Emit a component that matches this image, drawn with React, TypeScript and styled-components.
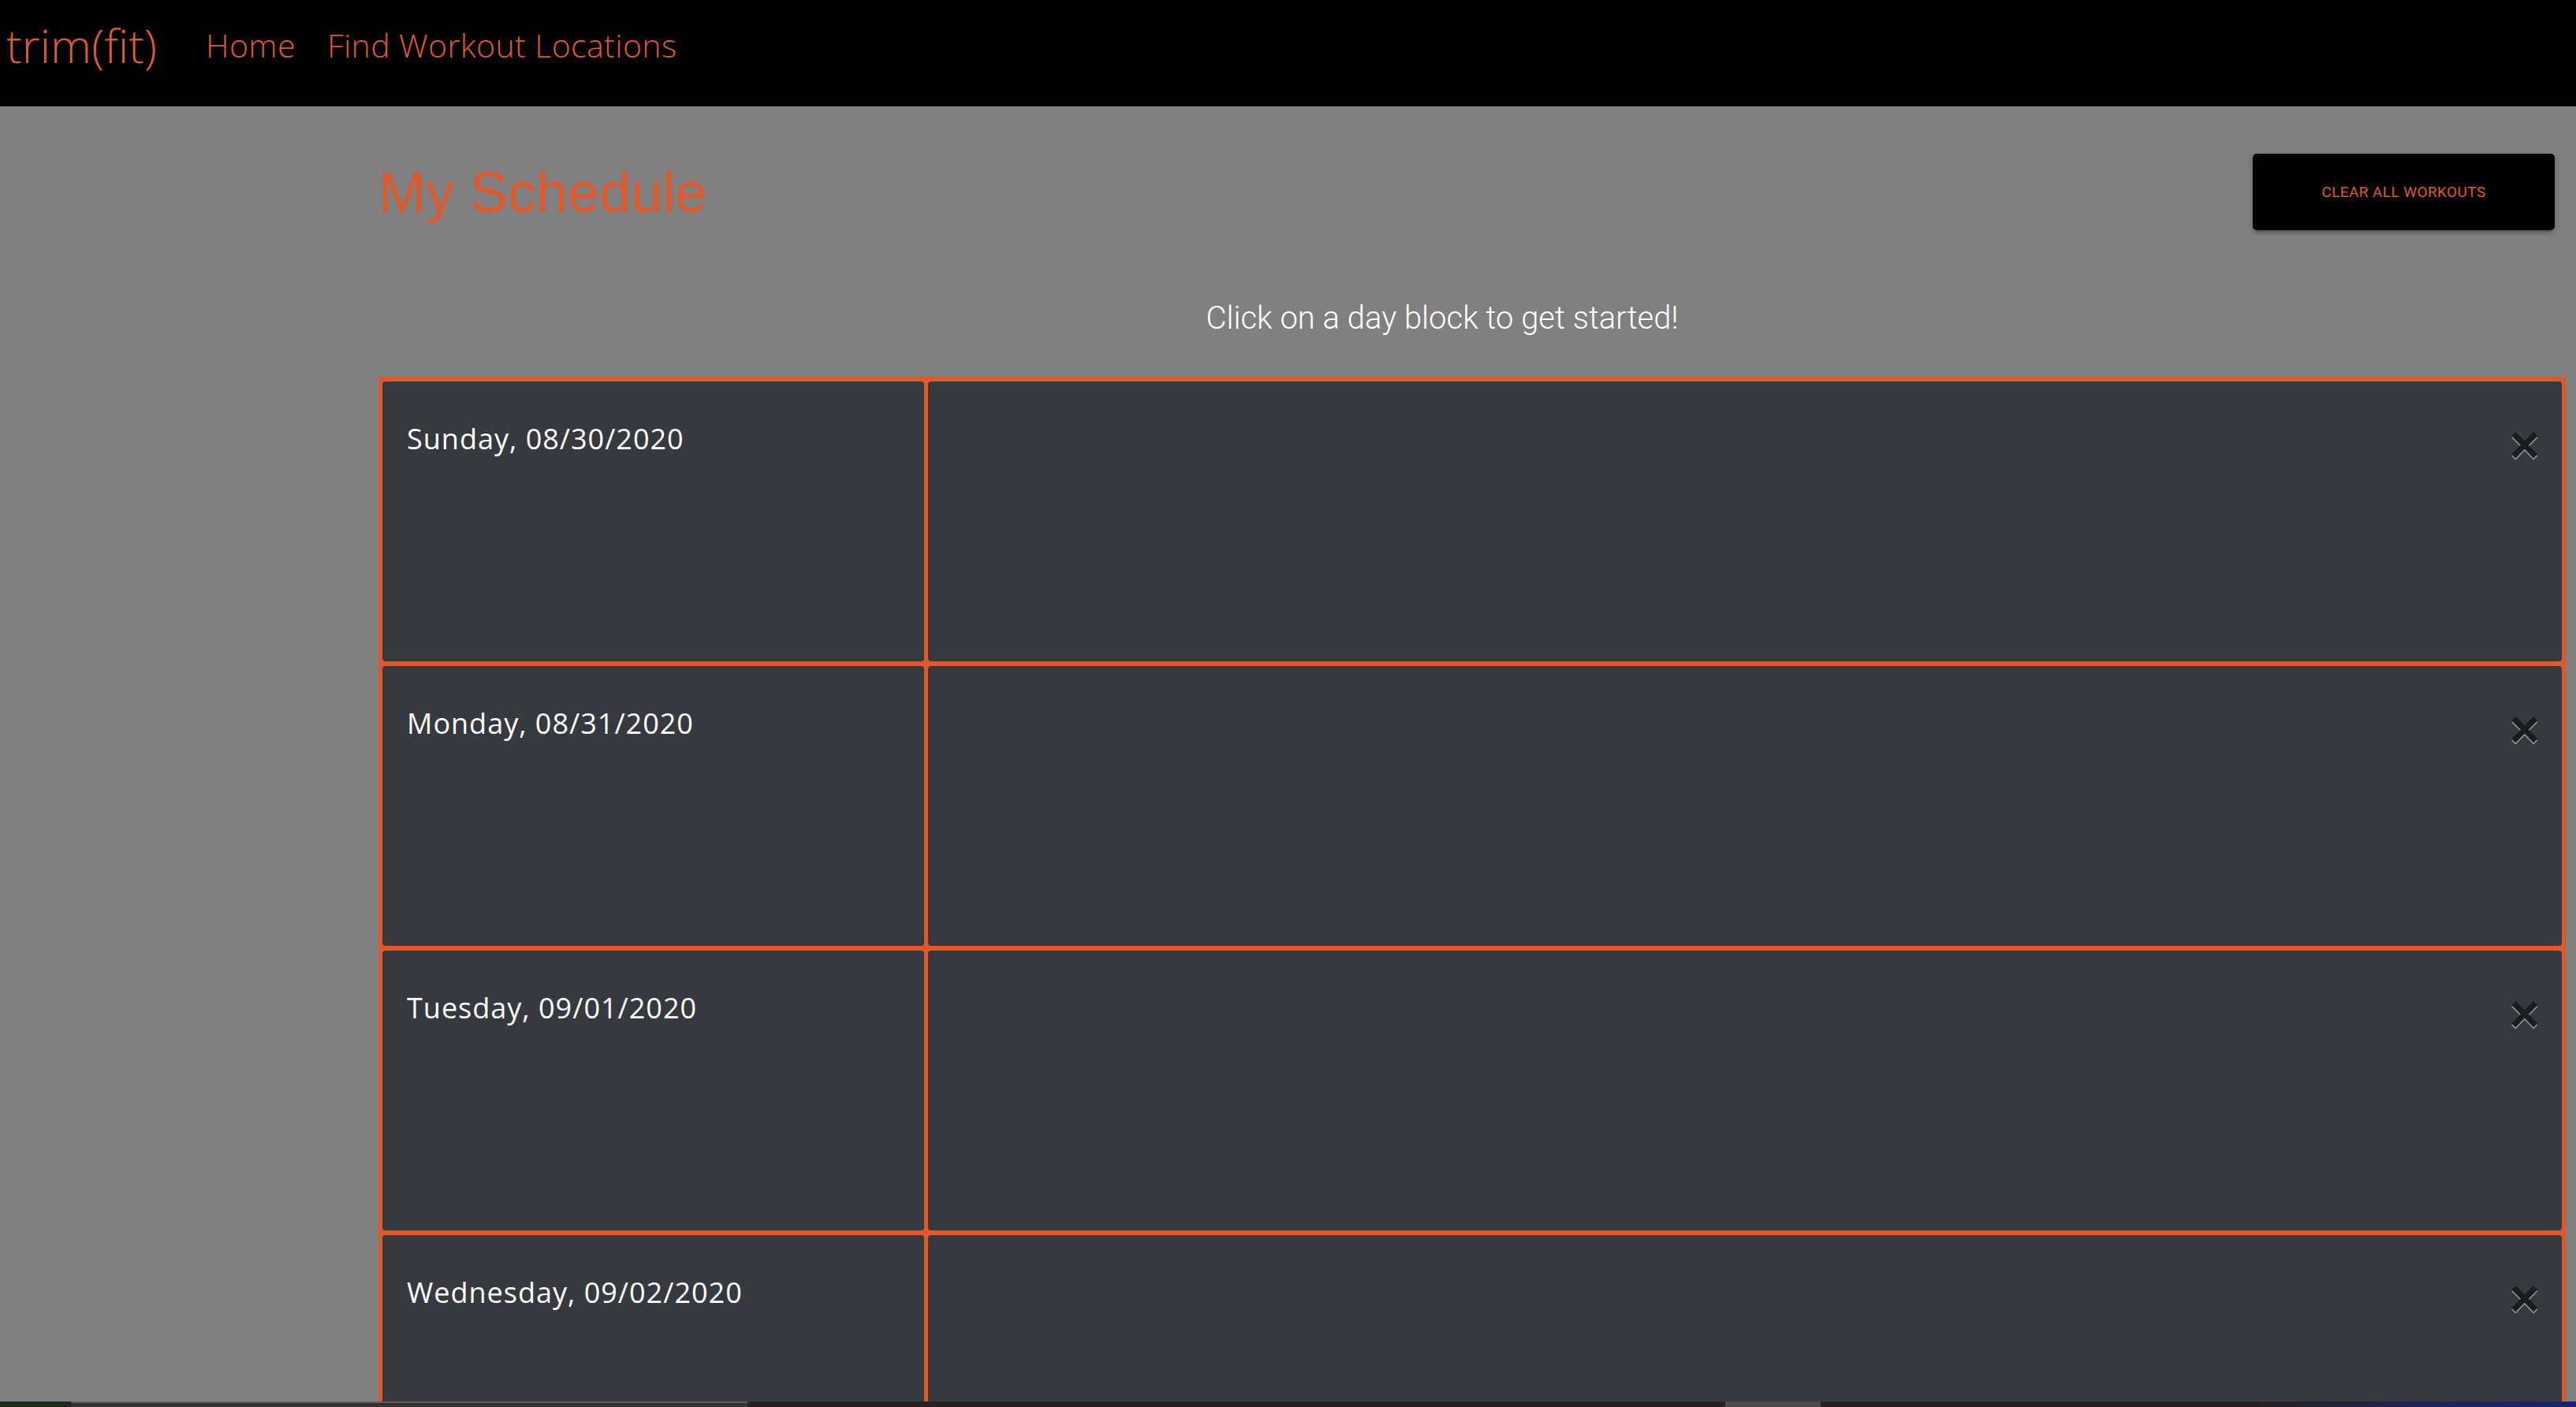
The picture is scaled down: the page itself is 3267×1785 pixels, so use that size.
import styled, { createGlobalStyle } from 'styled-components';

const ORANGE = '#e0592a';

const GlobalStyle = createGlobalStyle`
  html, body {
    margin: 0;
    padding: 0;
    height: 100%;
    overflow: hidden;
    background: #808080;
  }
  * {
    box-sizing: border-box;
  }
`;

const days = [
  'Sunday, 08/30/2020',
  'Monday, 08/31/2020',
  'Tuesday, 09/01/2020',
  'Wednesday, 09/02/2020'
];

const App = () => {
  return (
    <Page>
      <GlobalStyle />
      <NavBar>
        <Brand>trim(fit)</Brand>
        <NavLinks>
          <NavLink>Home</NavLink>
          <NavLink>Find Workout Locations</NavLink>
        </NavLinks>
      </NavBar>
      <Main>
        <HeaderRow>
          <Title>My Schedule</Title>
          <ClearButton>Clear All Workouts</ClearButton>
        </HeaderRow>
        <Hint>Click on a day block to get started!</Hint>
        <Schedule>
          {days.map((day) => (
            <DayRow key={day}>
              <DayCell>{day}</DayCell>
              <WorkoutCell>
                <CloseButton aria-label="Close">×</CloseButton>
              </WorkoutCell>
            </DayRow>
          ))}
        </Schedule>
      </Main>
      <Taskbar>
        <TaskStart />
        <TaskApp />
        <TaskGap />
        <TaskHighlight />
        <TaskFill />
        <TaskTray />
      </Taskbar>
    </Page>
  );
};

const Page = styled.div`
  height: 100vh;
  display: flex;
  flex-direction: column;
  background: #808080;
`;

const NavBar = styled.nav`
  height: 135px;
  flex-shrink: 0;
  background: #000;
  display: flex;
  align-items: center;
  padding: 0 0 20px 8px;
`;

const Brand = styled.div`
  font-family: 'Open Sans', Lato, sans-serif;
  font-weight: 300;
  font-size: 59px;
  line-height: 1.5;
  font-variant-ligatures: none;
  color: ${ORANGE};
  margin-right: 62px;
`;

const NavLinks = styled.div`
  display: flex;
  gap: 40px;
`;

const NavLink = styled.a`
  font-family: 'Open Sans', Lato, sans-serif;
  font-weight: 300;
  font-size: 41px;
  letter-spacing: 0.4px;
  line-height: 1.5;
  color: ${ORANGE};
  cursor: pointer;
`;

const Main = styled.main`
  flex: 1;
  overflow: hidden;
  padding: 60px 13px 0 480px;
`;

const HeaderRow = styled.div`
  display: flex;
  justify-content: space-between;
  align-items: center;
  padding-right: 14px;
`;

const Title = styled.h1`
  margin: 0;
  font-family: 'Liberation Sans', Arial, sans-serif;
  font-weight: 400;
  font-size: 72px;
  line-height: 1;
  color: ${ORANGE};
`;

const ClearButton = styled.button`
  width: 383px;
  height: 97px;
  border: none;
  border-radius: 5px;
  background: #000;
  color: ${ORANGE};
  font-family: Roboto, 'Liberation Sans', sans-serif;
  font-weight: 400;
  font-size: 19px;
  letter-spacing: 0.4px;
  text-transform: uppercase;
  cursor: pointer;
  box-shadow: 0 6px 2px -4px rgba(0, 0, 0, 0.2), 0 4px 4px 0 rgba(0, 0, 0, 0.14),
    0 2px 10px 0 rgba(0, 0, 0, 0.12);
`;

const Hint = styled.p`
  margin: 88px 0 50px;
  padding-right: 76px;
  text-align: center;
  font-family: Roboto, 'Liberation Sans', sans-serif;
  font-weight: 300;
  font-size: 40px;
  line-height: 48px;
  color: #fff;
`;

const Schedule = styled.div`
  display: flex;
  flex-direction: column;
  gap: 6px;
  padding: 6px 5px 5px;
  background: ${ORANGE};
`;

const DayRow = styled.div`
  display: grid;
  grid-template-columns: 687px 1fr;
  gap: 5px;
  height: 355px;
  flex-shrink: 0;
`;

const DayCell = styled.div`
  background: #36393e;
  border-radius: 4px;
  padding: 50px 0 0 31px;
  font-family: 'Open Sans', Lato, sans-serif;
  font-size: 36px;
  letter-spacing: 1px;
  line-height: 1.3;
  color: #fff;
  cursor: pointer;
`;

const WorkoutCell = styled.div`
  background: #36393e;
  border-radius: 4px;
  display: flex;
  justify-content: flex-end;
  align-items: flex-start;
  padding: 47px 28px 0 0;
`;

const CloseButton = styled.button`
  background: transparent;
  border: none;
  padding: 0;
  font-family: 'Liberation Sans', Arial, sans-serif;
  font-weight: 700;
  font-size: 66px;
  line-height: 1;
  color: #000;
  opacity: 0.5;
  text-shadow: 0 2px 0 #fff;
  cursor: pointer;
`;

const Taskbar = styled.div`
  height: 7px;
  flex-shrink: 0;
  display: flex;
  background: #2a2222;
`;

const TaskStart = styled.div`
  width: 90px;
  background: #1f2a1a;
`;

const TaskApp = styled.div`
  width: 858px;
  background: #333;
  border-top: 2px solid #5f5f5f;
`;

const TaskGap = styled.div`
  width: 1240px;
  background: #2a2222;
`;

const TaskHighlight = styled.div`
  width: 121px;
  background: #4f4a4a;
`;

const TaskFill = styled.div`
  flex: 1;
  background: #2a2222;
`;

const TaskTray = styled.div`
  width: 400px;
  background: linear-gradient(90deg, #2a2222, #1c2560 60%, #1a2370);
`;

export default App;
